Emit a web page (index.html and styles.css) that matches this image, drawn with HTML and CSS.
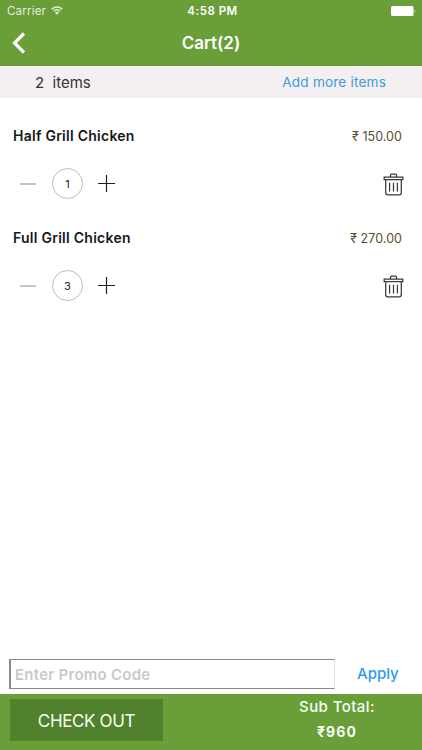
FILE: index.html
```html
<!DOCTYPE html>
<html lang="en">
<head>
<meta charset="utf-8">
<title>Cart</title>
<link rel="stylesheet" href="styles.css">
</head>
<body>
<svg class="symbols" aria-hidden="true">
  <symbol id="trash" viewBox="0 0 22 24">
    <path d="M7.5 4V2.2Q7.5 1.2 8.5 1.2h4q1 0 1 1V4M1.2 4h18.6v2.6H1.2zM2.7 6.6v13.2q0 2 2 2h11.6q2 0 2-2V6.6M6.6 9.8v8.7M10.5 9.8v8.7M14.4 9.8v8.7" fill="none" stroke="currentColor" stroke-width="1.25"/>
  </symbol>
</svg>
<div class="screen">
  <header class="header">
    <div class="status">
      <div class="carrier"><span>Carrier</span>
        <svg class="wifi" viewBox="0 0 12 9"><path d="M.7 3.2Q6-1.4 11.3 3.2M2.6 5.3Q6 2.4 9.4 5.3" fill="none" stroke="currentColor" stroke-width="1.4"/><path d="M3.9 6.6Q6 5 8.1 6.6L6 8.8z" fill="currentColor"/></svg>
      </div>
      <div class="time">4:58 PM</div>
      <svg class="battery" viewBox="0 0 26 10"><rect width="22.5" height="10" rx="1.5" fill="currentColor"/><path d="M23.6 3.2q1.6 1.8 0 3.6z" fill="currentColor"/></svg>
    </div>
    <div class="nav">
      <svg class="back" viewBox="0 0 14 22"><path d="M12 1.5L2.5 11l9.5 9.5" fill="none" stroke="currentColor" stroke-width="3.2"/></svg>
      <h1 class="title">Cart(2)</h1>
    </div>
  </header>
  <div class="summary"><span class="count">2&nbsp; items</span><a class="add">Add more items</a></div>
  <main class="cart">
    <section class="item">
      <div class="line"><h2 class="name">Half Grill Chicken</h2><span class="price">₹ 150.00</span></div>
      <div class="controls">
        <span class="minus"></span><span class="quantity">1</span>
        <svg class="plus" viewBox="0 0 17 17"><path d="M0 8.5h17M8.5 0v17" stroke="currentColor" stroke-width="1.2"/></svg>
        <svg class="trash"><use href="#trash"/></svg>
      </div>
    </section>
    <section class="item">
      <div class="line"><h2 class="name">Full Grill Chicken</h2><span class="price">₹ 270.00</span></div>
      <div class="controls">
        <span class="minus"></span><span class="quantity">3</span>
        <svg class="plus" viewBox="0 0 17 17"><path d="M0 8.5h17M8.5 0v17" stroke="currentColor" stroke-width="1.2"/></svg>
        <svg class="trash"><use href="#trash"/></svg>
      </div>
    </section>
  </main>
  <div class="promo"><div class="field"><span>Enter Promo Code</span></div><a class="apply">Apply</a></div>
  <footer class="footer">
    <div class="checkout"><span>CHECK OUT</span></div>
    <div class="total"><span class="label">Sub Total:</span><span class="amount">₹960</span></div>
  </footer>
</div>
</body>
</html>
```
FILE: styles.css
```css
* { box-sizing: border-box; }
body { margin: 0; font-family: Inter, "Liberation Sans", sans-serif; color: #181818; background: #fff; }
h1, h2 { margin: 0; }
svg { display: block; flex: none; }
span, a, h1, h2 { white-space: nowrap; }
.symbols { width: 0; height: 0; position: absolute; }
.screen { width: 422px; height: 750px; display: flex; flex-direction: column; overflow: hidden; }
.header { height: 66px; background: #699e39; color: #fff; flex: none; }
.status { height: 22px; padding: 0 5px 0 7px; display: grid; grid-template-columns: 1fr auto 1fr; align-items: center; }
.carrier { display: flex; align-items: center; gap: 5px; font-size: 11.5px; line-height: 22px; letter-spacing: .2px; color: #e5efdc; }
.wifi { width: 12px; height: 9px; margin-top: -2px; }
.time { font-size: 11.5px; font-weight: 600; letter-spacing: .5px; padding-left: 1px; }
.battery { width: 26px; height: 10px; justify-self: end; }
.nav { height: 42px; display: grid; grid-template-columns: 1fr auto 1fr; align-items: center; padding: 0 12px; }
.back { width: 14px; height: 22px; }
.title { font-size: 17px; font-weight: 600; line-height: 42px; }
.summary { height: 32px; flex: none; background: #f4f0f1; display: flex; align-items: center; justify-content: space-between; padding: 0 36px 0 35px; }
.count { font-size: 15px; color: #333; }
.add { font-size: 13.6px; color: #419bdc; letter-spacing: .18px; }
.cart { flex: 1; padding-top: 27px; }
.item { height: 102px; }
.line { height: 22px; display: flex; align-items: center; justify-content: space-between; padding: 0 20px 0 13px; }
.name { font-size: 14px; font-weight: 600; line-height: 20px; letter-spacing: .26px; }
.price { font-size: 12.5px; color: #5b4d32; letter-spacing: .05px; }
.controls { height: 31px; margin-top: 21px; padding: 0 17px 0 20px; display: flex; align-items: center; }
.minus { width: 16px; height: 2px; background: #c5c5c5; }
.quantity { width: 31px; height: 31px; margin-left: 16px; border: 1px solid #bdbdbd; border-radius: 50%; text-align: center; font-size: 11px; line-height: 30px; color: #222; }
.plus { width: 17px; height: 17px; margin-left: 15px; color: #222; }
.trash { width: 22px; height: 24px; margin: 2px 0 0 auto; color: #3b3b3d; }
.promo { height: 36px; flex: none; display: flex; align-items: flex-start; padding-left: 9px; }
.field { width: 326px; height: 30px; margin-top: 1px; border: solid #8b888a; border-width: 1px 1px 1px 2px; border-right-color: #ddd; display: flex; align-items: center; padding-left: 4px; font-size: 15px; font-weight: 600; letter-spacing: .26px; color: #c9c8ce; }
.apply { margin-left: 22px; line-height: 31px; font-size: 15px; font-weight: 500; color: #2c9bea; }
.footer { height: 56px; flex: none; background: #699e39; color: #f8fff3; display: flex; padding-left: 10px; align-items: flex-start; }
.checkout { width: 153px; height: 42px; margin-top: 5px; background: #51812c; display: flex; align-items: center; justify-content: center; font-size: 17px; line-height: 24px; padding-top: 2px; letter-spacing: -.35px; }
.total { width: 150px; margin-left: 99px; display: flex; flex-direction: column; align-items: center; }
.label { font-size: 15px; font-weight: 500; line-height: 25px; letter-spacing: .42px; }
.amount { font-size: 14px; font-weight: 700; line-height: 25px; letter-spacing: 1.1px; }
```
